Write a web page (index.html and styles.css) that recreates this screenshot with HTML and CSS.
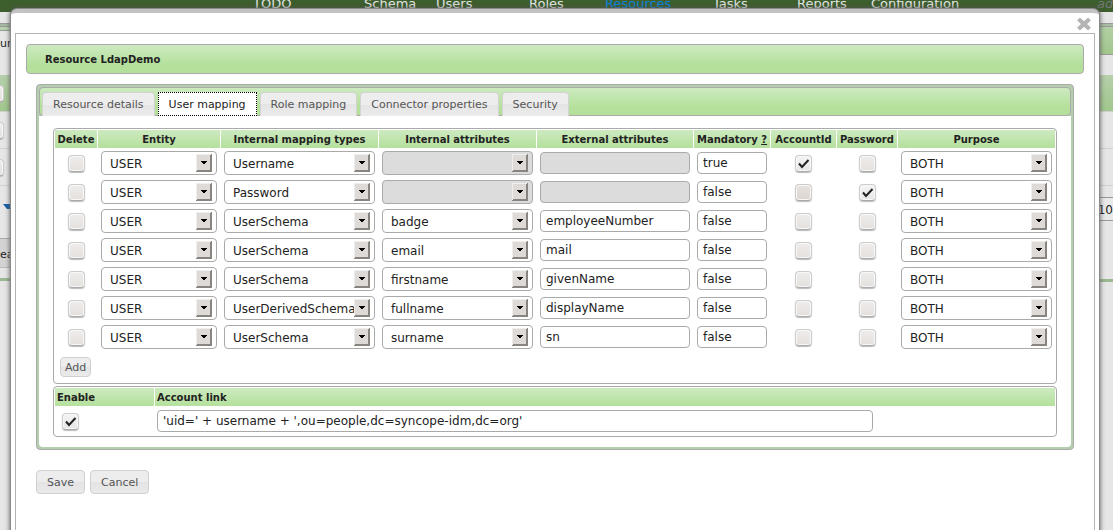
FILE: index.html
```
<!DOCTYPE html>
<html lang="en">
<head>
<meta charset="utf-8">
<title>Resource LdapDemo</title>
<link rel="stylesheet" href="styles.css">
</head>
<body>
<div class="page">
  <nav class="nav">
    <a href="#">TODO</a><a href="#">Schema</a><a href="#">Users</a><a href="#">Roles</a><a href="#" class="current">Resources</a><a href="#">Tasks</a><a href="#">Reports</a><a href="#">Configuration</a><em class="user">ad</em>
  </nav>
  <div class="backdrop">
    <div class="left">
      <div class="left-top"></div>
      <div class="left-label">ur</div>
      <div class="row green"><input type="checkbox" aria-label="Select resource 1"></div>
      <div class="row"><input type="checkbox" aria-label="Select resource 2"></div>
      <div class="row"><input type="checkbox" aria-label="Select resource 3"></div>
      <div class="pager"></div>
      <div class="create">ea</div>
      <div class="left-end"></div>
    </div>
    <div class="right">
      <div class="right-top"></div>
      <div class="right-gap"></div>
      <div class="row green"></div>
      <div class="row"></div>
      <div class="row"></div>
      <div class="rows-box"><span>10</span></div>
      <div class="right-end"></div>
    </div>
  </div>
</div>
<section class="modal" role="dialog" aria-labelledby="title">
  <button class="close" type="button" aria-label="Close"><svg viewBox="0 0 16 14" width="16" height="14"><path d="M2.500 2 13.500 12M13.500 2 2.500 12" stroke="#b4b4b4" stroke-width="4.200"/></svg></button>
  <form class="frame">
    <h1 id="title" class="title">Resource LdapDemo</h1>
    <div class="panel">
      <div class="tabs" role="tablist">
        <button type="button" role="tab">Resource details</button>
        <button type="button" role="tab" class="active" aria-selected="true">User mapping</button>
        <button type="button" role="tab">Role mapping</button>
        <button type="button" role="tab">Connector properties</button>
        <button type="button" role="tab">Security</button>
      </div>
      <div class="panel-body">
        <table class="grid mapping">
          <colgroup><col class="c-del"><col class="c-ent"><col class="c-wide"><col class="c-wide"><col class="c-ext"><col class="c-man"><col class="c-acc"><col class="c-pwd"><col class="c-wide"></colgroup>
          <thead><tr><th>Delete</th><th>Entity</th><th>Internal mapping types</th><th>Internal attributes</th><th>External attributes</th><th>Mandatory <a href="#">?</a></th><th>AccountId</th><th>Password</th><th>Purpose</th></tr></thead>
          <tbody id="rows"></tbody>
          <tfoot><tr><td colspan="9"><button type="button" class="btn add">Add</button></td></tr></tfoot>
        </table>
        <table class="grid link">
          <colgroup><col class="c-enable"><col></colgroup>
          <thead><tr><th>Enable</th><th>Account link</th></tr></thead>
          <tbody><tr><td><input type="checkbox" checked aria-label="Enable"></td><td><input type="text" class="account" aria-label="Account link" value="'uid=' + username + ',ou=people,dc=syncope-idm,dc=org'"></td></tr></tbody>
        </table>
      </div>
    </div>
    <div class="actions"><button type="button" class="btn">Save</button><button type="button" class="btn">Cancel</button></div>
  </form>
</section>
<script src="rows.js"></script>
</body>
</html>
```
FILE: rows.js
```
const mappings = [
  { type: "Username", attr: "", ext: "", mandatory: "true", account: true },
  { type: "Password", attr: "", ext: "", mandatory: "false", password: true },
  { type: "UserSchema", attr: "badge", ext: "employeeNumber", mandatory: "false" },
  { type: "UserSchema", attr: "email", ext: "mail", mandatory: "false" },
  { type: "UserSchema", attr: "firstname", ext: "givenName", mandatory: "false" },
  { type: "UserDerivedSchema", attr: "fullname", ext: "displayName", mandatory: "false" },
  { type: "UserSchema", attr: "surname", ext: "sn", mandatory: "false" }
];

const select = (label, value) =>
  `<select aria-label="${label}"${value ? "" : " disabled"}><option>${value}</option></select>`;
const text = (label, value) =>
  `<input type="text" aria-label="${label}" value="${value}"${value ? "" : " disabled"}>`;
const check = (label, on, off) =>
  `<input type="checkbox" aria-label="${label}"${on ? " checked" : ""}${off ? " disabled" : ""}>`;

document.getElementById("rows").innerHTML = mappings.map(m => `<tr>
  <td class="mid">${check("Delete")}</td>
  <td>${select("Entity", "USER")}</td>
  <td>${select("Internal mapping type", m.type)}</td>
  <td>${select("Internal attribute", m.attr)}</td>
  <td>${text("External attribute", m.ext)}</td>
  <td>${text("Mandatory", m.mandatory)}</td>
  <td class="mid">${check("AccountId", m.account, m.password)}</td>
  <td class="mid">${check("Password", m.password)}</td>
  <td>${select("Purpose", "BOTH")}</td>
</tr>`).join("");
```
FILE: styles.css
```
* { box-sizing: border-box; }
body {
  margin: 0;
  height: 100vh;
  overflow: hidden;
  position: relative;
  background: #e6e6e6;
  color: #222;
  font-family: "DejaVu Sans", sans-serif;
  font-size: 12px;
}
button, input, select { font: inherit; color: inherit; margin: 0; }

/* Page behind the dialog */
.nav {
  display: grid;
  grid-template-columns: 111px 72px 93px 76px 108px 84px 74px 226px auto;
  height: 12px;
  padding-left: 253px;
  overflow: hidden;
  background: #3d5e2d;
  font-size: 13px;
  line-height: 8px;
}
.nav a { color: #e6e6e6; text-decoration: none; }
.nav .current { color: #0a84e0; }
.nav .user { color: #777; }
.backdrop { display: flex; justify-content: space-between; padding-top: 11px; }
.left { width: 40px; }
.right { width: 40px; }
.left-top {
  height: 8px;
  border-top: 1px solid #999;
  border-bottom: 1px solid #999;
  background: linear-gradient(#a5b9a1 2px, #999 2px, #999 3px, #b9d2ae 3px);
}
.left-label { height: 44px; font-size: 11px; line-height: 26px; }
.row { height: 37px; border-bottom: 1px solid #d0d0d0; }
.row.green { background: linear-gradient(#b5cfaa, #a1c78c); }
.left .row { padding: 10px 0; }
.left .row input { display: block; margin-left: -13px; }
.pager { height: 53px; border-bottom: 1px solid #aaa; padding: 18px 0 0 3px; }
.pager::after {
  content: "";
  display: block;
  width: 8px;
  border: 4px solid transparent;
  border-top: 5px solid #1560a8;
}
.create { height: 29px; background: #d3d3d3; border-bottom: 1px solid #bbb; font-size: 11px; line-height: 31px; }
.left-end { height: 13px; border-bottom: 3px solid #9cb892; }
.right-top { height: 32px; border: solid #999; border-width: 1px 0; background: linear-gradient(#a9bda5 2px, #999 2px, #999 3px, #b2d0a5 3px, #a1c78c); }
.right-gap { height: 20px; }
.rows-box { margin-top: 11px; height: 24px; border: solid #999; border-width: 1px 0; line-height: 24px; text-align: right; background: #e9e9e9; }
.right-end { height: 61px; border-bottom: 3px solid #9cb892; }

/* Dialog */
.modal {
  position: absolute;
  inset: 9px 14px -8px 11px;
  padding: 20px 4px 0;
  border: solid #c3c3c3;
  border-width: 4px 0 0;
  border-radius: 6px 6px 0 0;
  background: #fff;
  box-shadow: 0 0 0 1px #8a8a8a, 0 0 5px 1px #555;
}
.close { position: absolute; top: 4px; right: 7px; width: 16px; height: 14px; border: 0; padding: 0; background: none; }
.close svg { display: block; }
.frame { height: 100%; padding: 10px; border: 1px solid #b4b4b4; }
.title {
  margin: 0;
  height: 30px;
  padding-left: 18px;
  border: 1px solid #aaa;
  border-radius: 4px;
  background: linear-gradient(#cdeac0, #b4e09c 70%);
  font-size: 10px;
  line-height: 29px;
}
.panel {
  margin: 10px 10px 20px;
  border: 1px solid #aaa;
  border-radius: 4px;
  background: #b5cfae;
  padding: 2px;
}
.tabs {
  display: flex;
  gap: 3px;
  height: 29px;
  padding: 4px 2px 0;
  border: 1px solid #aaa;
  border-radius: 4px;
  background: linear-gradient(#cdeac0, #b4e09c 70%);
}
.tabs button {
  height: 24px;
  padding: 0 10px;
  border: 1px solid #d3d3d3;
  border-bottom: 0;
  border-radius: 4px 4px 0 0;
  background: linear-gradient(#ededed 50%, #e4e4e4 50%, #ececec);
  color: #555;
  font-size: 11px;
}
.tabs .active { border: 1px dotted #000; background: #fff; color: #222; border-radius: 0; }
.panel-body { padding: 12px 14px 10px; border-radius: 0 0 4px 4px; background: #fff; }

/* Mapping tables */
.grid {
  width: 100%;
  table-layout: fixed;
  border: 1px solid #aaa;
  border-radius: 4px;
  border-collapse: separate;
  border-spacing: 1px;
}
.grid + .grid { margin-top: 2px; }
.grid th { height: 18px; padding: 0; background: linear-gradient(#cdeac0, #b4e09c); font-size: 10px; white-space: nowrap; }
.grid th a { color: inherit; }
.grid td { height: 28px; padding: 0 3px; }
.grid .mid { text-align: center; }
.grid tfoot td { height: 30px; padding-left: 5px; }
.c-del { width: 42px; }
.c-ent { width: 122px; }
.c-wide { width: 157px; }
.c-ext { width: 156px; }
.c-man { width: 76px; }
.c-acc { width: 65px; }
.c-pwd { width: 60px; }
.c-enable { width: 99px; }
.grid.link th { padding-left: 2px; text-align: left; }
.grid.link td { padding-left: 2px; }
.grid.link td:first-child { padding-left: 7px; }

select, input[type="text"] {
  display: block;
  width: 100%;
  border: 1px solid #aaa;
  border-radius: 4px;
  background-color: #fff;
}
select {
  appearance: none;
  height: 24px;
  padding: 1px 20px 0 8px;
  background-image: url("data:image/svg+xml,%3Csvg xmlns='http://www.w3.org/2000/svg' width='16' height='18' shape-rendering='crispEdges'%3E%3Cpath fill='%23f0eeec' d='M0 0h16v18H0z'/%3E%3Cpath fill='%23888480' d='M15 0h1v18H0v-1h1v-1h13V1h1z'/%3E%3Cpath fill='%23dedad7' d='M1 1h13v15H1z'/%3E%3Cpath d='M5 7h6v1h-1v1H9v1H7V9H6V8H5z'/%3E%3C/svg%3E");
  background-repeat: no-repeat;
  background-position: right 4px center;
}
input[type="text"] { height: 22px; padding: 0 5px; }
select:disabled, input[type="text"]:disabled { background-color: #dcdcdc; opacity: 1; }
.link .account { width: 716px; max-width: 100%; }
input[type="checkbox"] {
  appearance: none;
  width: 17px;
  height: 17px;
  vertical-align: middle;
  border: 1px solid #ccc;
  border-bottom-color: #aaa;
  border-radius: 4px;
  background: linear-gradient(#efedec, #e3e0dd) center no-repeat;
  box-shadow: inset 0 0 0 1px #f8f8f8, 0 1px 1px #bbb;
}
input[type="checkbox"]:checked {
  background: url("data:image/svg+xml,%3Csvg xmlns='http://www.w3.org/2000/svg' width='15' height='15'%3E%3Cpath d='M3 7.500 6 11 12.500 4' fill='none' stroke='%23222' stroke-width='2'/%3E%3C/svg%3E") center no-repeat, linear-gradient(#f4f4f4, #e6e6e6);
}
input[type="checkbox"]:disabled { background: linear-gradient(#e8e2df, #dcd6d2); }

.btn {
  height: 24px;
  padding: 0 10px;
  border: 1px solid #d0d0d0;
  border-radius: 4px;
  background: linear-gradient(#ededed 50%, #e3e3e3 50%, #ebebeb);
  color: #555;
  font-size: 11px;
}
.btn.add { display: block; height: 20px; padding: 0 4px; }
.actions { display: flex; gap: 5px; padding-left: 10px; }
```
